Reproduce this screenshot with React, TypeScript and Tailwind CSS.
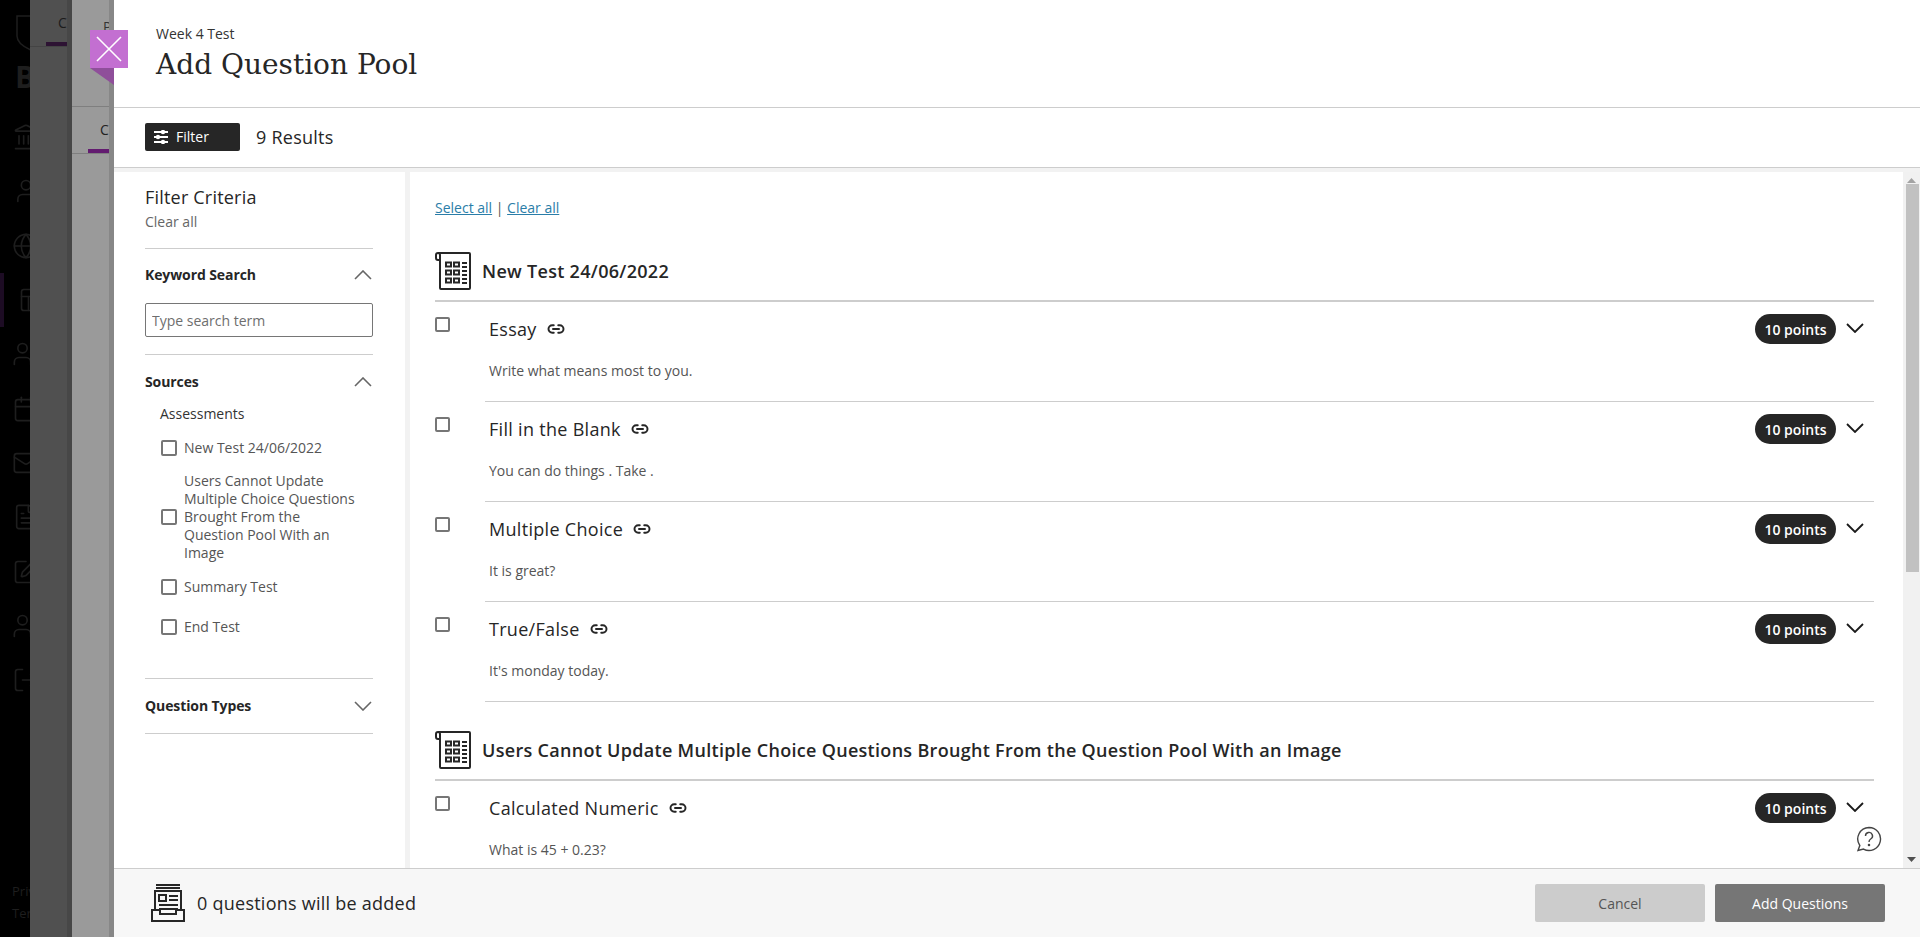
import React from "react";
import { Landmark, User, Globe, Layout, Users, Calendar, Mail, FileText, SquarePen, UserCheck, LogOut, Link2 } from "lucide-react";

const Chevron = ({ up, dark }: { up?: boolean; dark?: boolean }) => (
  <svg width="18" height="10" viewBox="0 0 18 10" fill="none" stroke={dark ? "#1a1a1a" : "#666666"} strokeWidth={dark ? 1.8 : 1.6}>
    <polyline points={up ? "1,9 9,1 17,9" : "1,1 9,9 17,1"} />
  </svg>
);

const ScrollIcon = () => (
  <svg width="38" height="38" viewBox="0 0 38 38" fill="none" stroke="#262626" strokeWidth="2" className="shrink-0 -ml-px">
    <path d="M6 8V3a2 2 0 0 0-4 0v3a2 2 0 0 0 2 2h2" />
    <path d="M4 1h31a1 1 0 0 1 1 1v34a1 1 0 0 1-1 1H7a1 1 0 0 1-1-1V8" />
    <path strokeWidth="2" d="M12 10.500h5v4h-5zM20 10.500h5v4h-5zM12 18.500h5v4h-5zM20 18.500h5v4h-5zM12 26.500h5v4h-5zM20 26.500h5v4h-5z" />
    <path d="M28 11h5M28 15h5M28 19h5M28 23h5M28 27h5M28 31h5" />
  </svg>
);

const Box = ({ small }: { small?: boolean }) => (
  <span className={`${small ? "w-[15px] h-[15px]" : "w-4 h-4"} shrink-0 border-2 border-[#767676] rounded-[2px] bg-white block`} />
);

const Row = ({ title, desc }: { title: string; desc: string }) => (
  <div className="flex">
    <div className="w-[50px] shrink-0 pt-[15px]">
      <Box small />
    </div>
    <div className="flex-1 h-[100px] border-b border-[#cdcdcd] pl-1 pr-[9px] pt-[11px]">
      <div className="flex items-center h-[32px]">
        <span className="text-[18px] leading-6 tracking-[0.3px] text-[#262626]">{title}</span>
        <Link2 size={18} strokeWidth={2.6} className="ml-[10px] text-[#262626]" />
        <span className="ml-auto h-[30px] w-[81px] rounded-full bg-[#262626] text-white text-[14px] font-semibold flex items-center justify-center">10 points</span>
        <span className="ml-[9px] w-5 flex justify-center -translate-y-px"><Chevron dark /></span>
      </div>
      <p className="mt-[16px] text-[14px] leading-5 text-[#555555]">{desc}</p>
    </div>
  </div>
);

const Section = ({ title, children }: { title: string; children: React.ReactNode }) => (
  <section>
    <div className="flex items-center gap-[10px] h-[50px] border-b-2 border-[#cdcdcd] pb-[10px]">
      <ScrollIcon />
      <h2 className="text-[18px] font-semibold tracking-[0.3px] text-[#262626]">{title}</h2>
    </div>
    {children}
  </section>
);

const SourceItem = ({ label, className = "" }: { label: string; className?: string }) => (
  <label className={`flex items-center gap-[7px] pl-[16px] text-[14px] leading-[18px] text-[#555555] ${className}`}>
    <Box />
    <span className="w-[178px]">{label}</span>
  </label>
);

const navIcons = [Landmark, User, Globe, Layout, Users, Calendar, Mail, FileText, SquarePen, UserCheck, LogOut];

export default function App() {
  return (
    <div className="flex h-[937px] w-[1920px] overflow-hidden bg-black" style={{ fontFamily: '"Open Sans", "Noto Sans", sans-serif' }}>
      {/* dimmed navigation */}
      <div className="w-[30px] shrink-0 flex flex-col overflow-hidden text-[#1e1e1e]">
        <div className="pl-[16px] pt-[15px] h-[110px]">
          <svg width="30" height="36" viewBox="0 0 30 36" fill="none" stroke="#1e1e1e" strokeWidth="1.500"><path d="M1 1h28v20c0 7-7 11-14 14C8 32 1 28 1 21z" /></svg>
          <span className="block text-[30px] leading-8 font-bold mt-[10px] -ml-px">B</span>
        </div>
        {navIcons.map((Icon, i) => (
          <div key={i} className={`h-[54.300px] pl-3 shrink-0 flex items-center w-[40px] ${i === 3 ? "border-l-4 border-[#1d0c24] pl-[14px]" : ""}`}>
            <Icon size={28} strokeWidth={1.4} className="shrink-0" />
          </div>
        ))}
        <div className="mt-auto pl-3 pb-[13px] text-[13px] leading-[22px] text-[#1e1e1e]">
          <p>Priv</p>
          <p>Ter</p>
        </div>
      </div>
      {/* dimmed layers */}
      <div className="w-[42px] shrink-0 bg-[#505050] border-r-[5px] border-[#474747] overflow-hidden">
        <div className="h-[47px] border-b border-[#444444] pl-[28px] pt-[10px] relative">
          <span className="text-[14px] text-[#1c1c1c]">Co</span>
          <span className="absolute left-4 right-0 bottom-0 h-1 bg-[#2d1333]" />
        </div>
      </div>
      <div className="w-[37px] shrink-0 bg-[#9a9a9a] overflow-hidden">
        <div className="h-[107px] border-b border-[#7f7f7f] pl-[31px] pt-[14px]">
          <span className="text-[14px] text-[#333333]">Pe</span>
        </div>
        <div className="h-[47px] border-b border-[#7f7f7f] relative pl-[28px] pt-[10px]">
          <span className="text-[14px] text-[#222222]">Co</span>
          <span className="absolute left-4 right-0 bottom-0 h-1 bg-[#631b70]" />
        </div>
      </div>
      <div className="w-[5px] shrink-0 bg-[#878787]" />

      {/* panel */}
      <div className="relative flex-1 min-w-0 flex flex-col bg-white">
        {/* close tab */}
        <button className="absolute left-[-24px] top-[30px] w-[38px] h-[38px] bg-[#c36fd1] flex items-center justify-center z-10">
          <svg width="26" height="26" viewBox="0 0 26 26" stroke="white" strokeWidth="1.600"><path d="M1 1l24 24M25 1L1 25" /></svg>
        </button>
        <svg width="24" height="17" viewBox="0 0 24 17" className="absolute left-[-24px] top-[68px]"><polygon points="0,0 24,0 24,17" fill="#8f4f9a" /></svg>

        <header className="h-[108px] shrink-0 border-b border-[#cdcdcd] pl-[42px] pt-[23px]">
          <p className="text-[14px] leading-[22px] text-[#333333]">Week 4 Test</p>
          <h1 className="text-[28px] leading-[38px] text-[#262626] mt-[1px]" style={{ fontFamily: '"DejaVu Serif", serif' }}>Add Question Pool</h1>
        </header>

        <div className="h-[60px] shrink-0 border-b border-[#cdcdcd] flex items-center pl-[31px]">
          <button className="w-[95px] h-[28px] bg-[#262626] rounded-[2px] text-white text-[14px] flex items-center pl-[9px] gap-[8px] -translate-y-px">
            <svg width="14" height="14" viewBox="0 0 14 14" fill="white"><rect x="0" y="1" width="14" height="2" /><rect x="0" y="6" width="14" height="2" /><rect x="0" y="11" width="14" height="2" /><circle cx="9" cy="2" r="2.200" /><circle cx="4" cy="7" r="2.200" /><circle cx="9" cy="12" r="2.200" /></svg>
            Filter
          </button>
          <span className="ml-[16px] text-[18px] tracking-[0.25px] text-[#262626]">9 Results</span>
        </div>

        <div className="flex-1 min-h-0 flex border-t-[4px] border-[#f2f2f2] overflow-hidden">
          {/* filter sidebar */}
          <aside className="w-[296px] shrink-0 border-r-[5px] border-[#f2f2f2] pl-[31px] pr-[32px] pt-[11px]">
            <h2 className="text-[18px] leading-7 tracking-[0.2px] text-[#262626]">Filter Criteria</h2>
            <p className="text-[14px] leading-5 text-[#666666] mt-[1px]">Clear all</p>
            <div className="mt-[16px] border-t border-[#cdcdcd] h-[106px]">
              <div className="flex items-center justify-between h-[51px] mb-[3px] pr-px">
                <span className="text-[14px] font-bold tracking-[-0.1px] text-[#262626]">Keyword Search</span>
                <Chevron up />
              </div>
              <input placeholder="Type search term" className="w-full h-[34px] border border-[#767676] rounded-[2px] px-[6px] text-[14px] placeholder:text-[#6e6e6e] outline-none" />
            </div>
            <div className="border-t border-[#cdcdcd] h-[324px]">
              <div className="flex items-center justify-between h-[53px] pr-px">
                <span className="text-[14px] font-bold tracking-[-0.1px] text-[#262626]">Sources</span>
                <Chevron up />
              </div>
              <p className="pl-[15px] text-[14px] leading-5 text-[#333333] -mt-[4px]">Assessments</p>
              <SourceItem className="mt-[15px]" label="New Test 24/06/2022" />
              <SourceItem className="mt-[15px]" label="Users Cannot Update Multiple Choice Questions Brought From the Question Pool With an Image" />
              <SourceItem className="mt-[16px]" label="Summary Test" />
              <SourceItem className="mt-[22px]" label="End Test" />
            </div>
            <div className="border-y border-[#cdcdcd] h-[56px] flex items-center justify-between pr-px">
              <span className="text-[14px] font-bold tracking-[-0.1px] text-[#262626] -translate-y-px">Question Types</span>
              <Chevron />
            </div>
          </aside>

          {/* results */}
          <main className="relative flex-1 min-w-0 pl-[25px] pr-[29px] pt-[26px] overflow-hidden">
            <p className="text-[14px] leading-5 text-[#555555]">
              <a className="text-[#2a7da8] underline">Select all</a> | <a className="text-[#2a7da8] underline">Clear all</a>
            </p>
            <div className="mt-[34px]">
              <Section title="New Test 24/06/2022">
                <Row title="Essay" desc="Write what means most to you." />
                <Row title="Fill in the Blank" desc="You can do things . Take ." />
                <Row title="Multiple Choice" desc="It is great?" />
                <Row title="True/False" desc="It's monday today." />
              </Section>
            </div>
            <div className="mt-[29px]">
              <Section title="Users Cannot Update Multiple Choice Questions Brought From the Question Pool With an Image">
                <Row title="Calculated Numeric" desc="What is 45 + 0.23?" />
              </Section>
            </div>
            <svg width="26" height="26" viewBox="0 0 26 26" fill="none" stroke="#444444" strokeWidth="1.400" className="absolute right-[21px] bottom-[16px]">
              <path d="M13 1.500a11.500 11.500 0 1 1-5.500 21.600L2 24.500l1.800-5A11.500 11.500 0 0 1 13 1.500z" />
              <path d="M9.500 10a3.500 3.500 0 1 1 5.200 3c-1.200.7-1.700 1.400-1.700 3" />
              <circle cx="13" cy="19" r=".6" fill="#444444" />
            </svg>
          </main>

          {/* scrollbar */}
          <div className="w-[17px] shrink-0 bg-[#f1f1f1] flex flex-col items-center">
            <svg width="9" height="5" viewBox="0 0 9 5" className="mt-[6px]"><polygon points="4.500,0 9,5 0,5" fill="#a3a3a3" /></svg>
            <div className="w-[13px] h-[388px] mt-[1px] bg-[#c1c1c1] ml-px" />
            <svg width="9" height="5" viewBox="0 0 9 5" className="mt-auto mb-[6px]"><polygon points="0,0 9,0 4.500,5" fill="#505050" /></svg>
          </div>
        </div>

        <footer className="h-[69px] shrink-0 bg-[#f7f7f7] border-t border-[#cdcdcd] flex items-center pl-[37px] pr-[35px]">
          <svg width="34" height="38" viewBox="0 0 34 38" fill="none" stroke="#262626" strokeWidth="2" className="shrink-0">
            <path d="M5 1h24M5 4h24" />
            <path d="M4 27V7h26v20" />
            <rect x="8" y="11" width="7" height="6" />
            <path d="M18 12h9M18 16h9M8 21h19M8 25h19" />
            <path d="M1 26h8v4h16v-4h8v11H1z" />
          </svg>
          <span className="ml-[12px] text-[18px] tracking-[0.25px] text-[#262626]">0 questions will be added</span>
          <button className="ml-auto w-[170px] h-[38px] bg-[#cccccc] rounded-[2px] text-[14px] text-[#555555]">Cancel</button>
          <button className="ml-[10px] w-[170px] h-[38px] bg-[#767676] rounded-[2px] text-[14px] text-white">Add Questions</button>
        </footer>
      </div>
    </div>
  );
}
